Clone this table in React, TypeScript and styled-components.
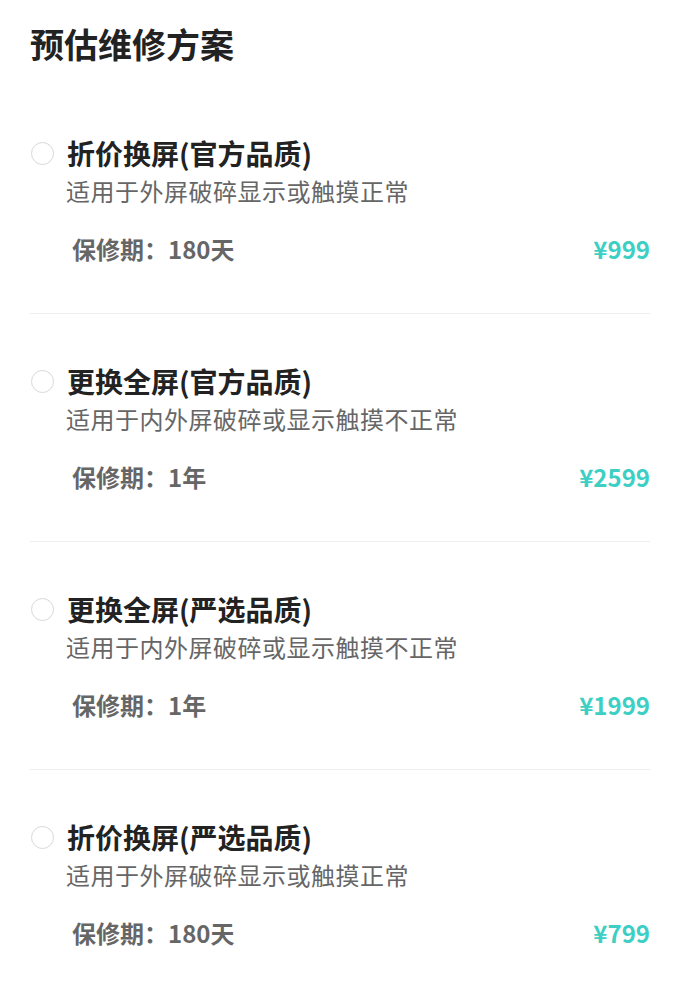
import React from "react";
import styled, { createGlobalStyle } from "styled-components";

const GlobalStyle = createGlobalStyle`
  body {
    margin: 0;
    background: #fff;
    font-family: "Noto Sans CJK SC", "Liberation Sans", sans-serif;
  }
`;

const Page = styled.div`
  padding: 23px 30px 0 30px;
`;

const Heading = styled.h1`
  margin: 0 0 21px 0;
  font-size: 34px;
  line-height: 42px;
  font-weight: 700;
  color: #222;
`;

const Item = styled.div<{ last?: boolean }>`
  padding: 49px 0 50px 0;
  border-bottom: ${(p) => (p.last ? "none" : "1px solid #eeeeee")};
`;

const TitleRow = styled.div`
  display: flex;
  align-items: center;
  height: 36px;
`;

const Radio = styled.span`
  box-sizing: border-box;
  width: 23px;
  height: 23px;
  border-radius: 50%;
  border: 1.5px solid #d8d8d8;
  margin: 0 13px 0 1px;
  flex: none;
`;

const Title = styled.div`
  font-size: 28px;
  line-height: 36px;
  font-weight: 700;
  color: #222;
`;

const Desc = styled.div`
  margin: 5px 0 0 36px;
  font-size: 24px;
  line-height: 30px;
  letter-spacing: 0.5px;
  color: #666;
`;

const Footer = styled.div`
  display: flex;
  justify-content: space-between;
  align-items: center;
  margin-top: 27px;
  padding-left: 42px;
  height: 30px;
  font-size: 24px;
  font-weight: 700;
`;

const Warranty = styled.span`
  color: #666;
`;

const Price = styled.span`
  color: #3dcfc4;
`;

type Plan = {
  name: string;
  desc: string;
  warranty: string;
  price: number;
};

const plans: Plan[] = [
  { name: "折价换屏(官方品质)", desc: "适用于外屏破碎显示或触摸正常", warranty: "180天", price: 999 },
  { name: "更换全屏(官方品质)", desc: "适用于内外屏破碎或显示触摸不正常", warranty: "1年", price: 2599 },
  { name: "更换全屏(严选品质)", desc: "适用于内外屏破碎或显示触摸不正常", warranty: "1年", price: 1999 },
  { name: "折价换屏(严选品质)", desc: "适用于外屏破碎显示或触摸正常", warranty: "180天", price: 799 },
];

export default function App() {
  return (
    <Page>
      <GlobalStyle />
      <Heading>预估维修方案</Heading>
      {plans.map((plan, i) => (
        <Item key={i} last={i === plans.length - 1}>
          <TitleRow>
            <Radio />
            <Title>{plan.name}</Title>
          </TitleRow>
          <Desc>{plan.desc}</Desc>
          <Footer>
            <Warranty>保修期：{plan.warranty}</Warranty>
            <Price>¥{plan.price}</Price>
          </Footer>
        </Item>
      ))}
    </Page>
  );
}
